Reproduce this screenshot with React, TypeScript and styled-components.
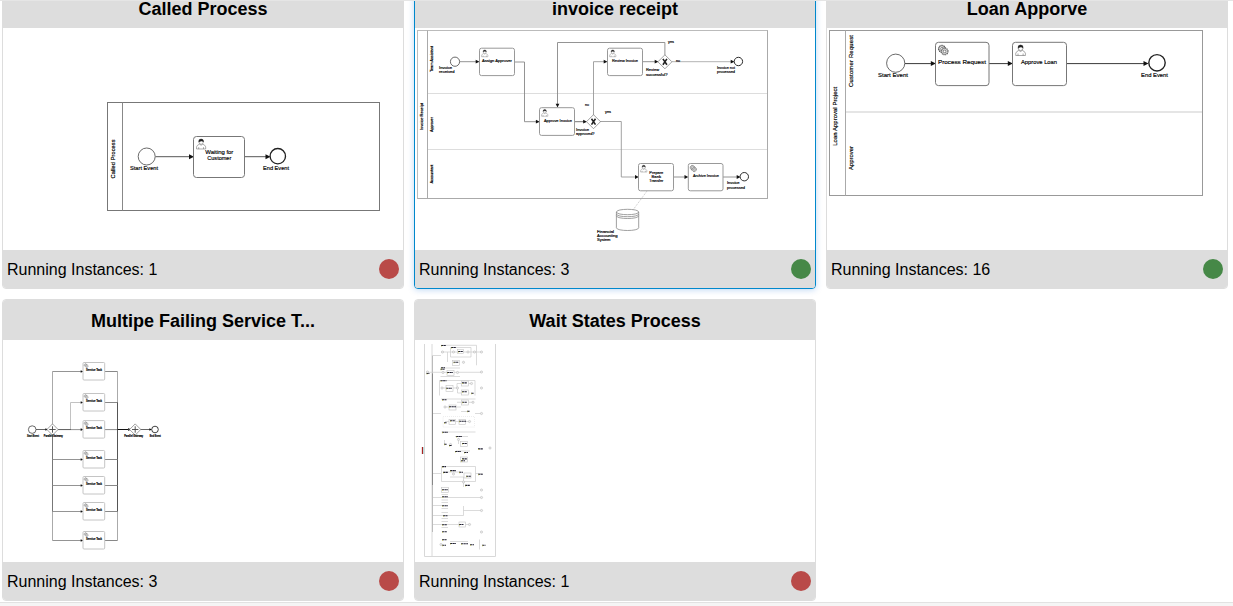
import React from "react";
import styled, { createGlobalStyle } from "styled-components";

const GlobalStyle = createGlobalStyle`
  * { box-sizing: border-box; }
  body { margin: 0; background: #f5f5f5; font-family: "Liberation Sans", Arial, sans-serif; color: #000; overflow: hidden; }
`;

const Page = styled.main`
  height: 603px;
  overflow: hidden;
  background: #fff;
  border-top: 1px solid #e5e5e5;
  border-bottom: 1px solid #e2e2e2;
`;

const Grid = styled.div`
  display: grid;
  grid-template-columns: repeat(3, 402px);
  gap: 10px;
  margin: -14px 0 0 2px;
`;

const Card = styled.section<{ $selected?: boolean }>`
  display: flex;
  flex-direction: column;
  height: 302px;
  overflow: hidden;
  background: #fff;
  border: 1px solid ${(p) => (p.$selected ? "#0088cc" : "#dddddd")};
  border-radius: 4px;
  box-shadow: ${(p) => (p.$selected ? "0 1px 6px rgba(0, 105, 214, 0.25)" : "none")};
`;

const CardTitle = styled.h4`
  margin: 0;
  height: 40px;
  flex: none;
  background: #ddd;
  font-size: 18px;
  font-weight: 700;
  line-height: 20px;
  padding-top: 11px;
  text-align: center;
  white-space: nowrap;
`;

const Preview = styled.svg`
  display: block;
  width: 400px;
  height: 222px;
  flex: none;
  font-family: "Liberation Sans", Arial, sans-serif;
`;

const CardFooter = styled.footer`
  display: flex;
  flex: 1;
  align-items: center;
  justify-content: space-between;
  padding: 0 4px;
  background: #ddd;
  font-size: 16px;
`;

const RunningCount = styled.span`
  line-height: 18px;
  padding-top: 2px;
`;

const StateDot = styled.span<{ $healthy: boolean }>`
  width: 20px;
  height: 20px;
  border-radius: 50%;
  background: ${(p) => (p.$healthy ? "#468847" : "#b94a48")};
`;

type LabelProps = { x: number; y: number; lines: string[]; size: number; widths?: number[]; anchor?: "start" | "middle"; gap?: number; weight?: number };

const Label = ({ x, y, lines, size, widths, anchor = "middle", gap = 4, weight = 400 }: LabelProps) => (
  <g fontSize={size} textAnchor={anchor} fill="#000" stroke="#000" strokeWidth={0.16} fontWeight={weight}>
    {lines.map((t, i) => (
      <text key={i} x={x} y={y + i * gap} textLength={widths?.[i]} lengthAdjust="spacingAndGlyphs">{t}</text>
    ))}
  </g>
);

const SideLabel = ({ x, y, text, size, length }: { x: number; y: number; text: string; size: number; length: number }) => (
  <text transform={`translate(${x} ${y}) rotate(-90)`} fontSize={size} textAnchor="middle" textLength={length} stroke="#000" strokeWidth={0.18}>
    {text}
  </text>
);

const Flow = ({ d, tip, dir = "right", size = 3.8, color = "#444", width = 0.9 }: { d: string; tip?: [number, number]; dir?: "right" | "down"; size?: number; color?: string; width?: number }) => (
  <g>
    <path d={d} fill="none" stroke={color} strokeWidth={width} />
    {tip && (
      <path
        fill="#111"
        d={dir === "right"
          ? `M${tip[0]} ${tip[1]}l${-size} ${-size / 2}v${size}z`
          : `M${tip[0]} ${tip[1]}l${-size / 2} ${-size}h${size}z`}
      />
    )}
  </g>
);

const UserIcon = ({ x, y, s }: { x: number; y: number; s: number }) => (
  <g transform={`translate(${x} ${y}) scale(${s * 1.05})`} stroke="#555" strokeWidth={0.9}>
    <path fill="#fff" d="M0.5 19v-4q1-3.5 5.5-5l3 2 3-2q4.500 1.500 5.500 5v4zM4.500 15.500v3.500M13.500 15.500v3.500" />
    <circle cx={9} cy={6} r={4.2} fill="#fff" />
    <path fill="#222" stroke="#222" d="M4.800 6q-1-5.500 4.200-5.500t4.200 5.500q-1-2.600-4.200-1.800t-4.200 1.800z" />
  </g>
);

const GearIcon = ({ x, y, s }: { x: number; y: number; s: number }) => (
  <g transform={`translate(${x} ${y}) scale(${s})`} fill="#fff" stroke="#444">
    <circle cx={8} cy={8} r={6.4} strokeWidth={2} strokeDasharray="2 1.350" />
    <circle cx={8} cy={8} r={5.4} strokeWidth={1.1} />
    <circle cx={8} cy={8} r={2.6} strokeWidth={1.1} />
    <circle cx={13} cy={13} r={6.4} strokeWidth={2} strokeDasharray="2 1.350" />
    <circle cx={13} cy={13} r={5.4} strokeWidth={1.1} />
    <circle cx={13} cy={13} r={2.6} strokeWidth={1.3} />
  </g>
);

const Task = ({ x, y, w, h, kind, color = "#777", r = 2 }: { x: number; y: number; w: number; h: number; kind: "user" | "service"; color?: string; r?: number }) => {
  const s = w / 100;
  return (
    <g>
      <rect x={x} y={y} width={w} height={h} rx={r} fill="#fff" stroke={color} strokeWidth={1} />
      {kind === "user" ? <UserIcon x={x + 5.5 * s} y={y + 4.5 * s} s={s} /> : <GearIcon x={x + 4 * s} y={y + 4 * s} s={s} />}
    </g>
  );
};

const Gateway = ({ x, y, r, kind }: { x: number; y: number; r: number; kind: "x" | "+" }) => (
  <g>
    <path d={`M${x} ${y - r}l${r} ${r}l${-r} ${r}l${-r} ${-r}z`} fill="#fff" stroke="#777" strokeWidth={0.7} />
    {kind === "x" ? (
      <path d={`M${x - 2} ${y - 2.9}l4 5.8m0 -5.8l-4 5.8`} stroke="#222" strokeWidth={1.6} />
    ) : (
      <path d={`M${x - 3.2} ${y}h6.4m-3.2 -3.2v6.4`} stroke="#444" strokeWidth={0.9} />
    )}
  </g>
);

const Event = ({ x, y, r, end }: { x: number; y: number; r: number; end?: boolean }) => (
  <circle cx={x} cy={y} r={r} fill="#fff" stroke={end ? "#222" : "#444"} strokeWidth={end ? 0.5 + r * 0.11 : 0.8} />
);

const CalledProcess = () => (
  <Preview viewBox="3 28 400 222">
    <rect x={107.5} y={102.5} width={272} height={108} fill="#fff" stroke="#777" />
    <path d="M122.5 102.5v108" stroke="#888" />
    <SideLabel x={115} y={159} text="Called Process" size={5.6} length={39} />
    <Flow d="M155.5 156.7H190" tip={[194, 156.7]} size={5} />
    <Flow d="M245 156.7H266" tip={[270.5, 156.7]} size={5} />
    <Event x={146.7} y={156.5} r={8.5} />
    <Task x={193.5} y={136.5} w={51} h={41} kind="user" r={3} />
    <Event x={277.8} y={156.2} r={7.7} end />
    <Label x={144} y={170} lines={["Start Event"]} widths={[28]} size={5.6} />
    <Label x={219.3} y={154} lines={["Waiting for", "Customer"]} widths={[28, 24]} size={5.6} gap={6} />
    <Label x={276} y={170} lines={["End Event"]} widths={[26]} size={5.6} />
  </Preview>
);

const InvoiceReceipt = () => (
  <Preview viewBox="415 28 400 222">
    <rect x={417.5} y={30.5} width={350} height={168} fill="#fff" stroke="#bbb" />
    <path d="M427.5 30.5v168M417.5 198.5h350M767.5 30.5v168" stroke="#aaa" fill="none" />
    <path d="M428 93.5h339M428 149.5h339" stroke="#ddd" />
    <SideLabel x={422.7} y={116.5} text="Invoice Receipt" size={4} length={27} />
    <SideLabel x={433.3} y={59} text="Team Assistant" size={4} length={26} />
    <SideLabel x={433.3} y={124.5} text="Approver" size={4} length={15} />
    <SideLabel x={433.3} y={174} text="Accountant" size={4} length={19} />
    <Flow d="M460 61.7H477" tip={[479.5, 61.7]} color="#888" />
    <Flow d="M515 62H524.5V121.7H537" tip={[539.7, 121.7]} color="#888" />
    <Flow d="M575 121.7H584" tip={[587, 121.7]} color="#666" />
    <Flow d="M593.5 115V61.7H605" tip={[607.5, 61.7]} color="#999" />
    <Flow d="M643 61.7H655" tip={[658.5, 61.7]} color="#888" />
    <Flow d="M664.9 55V42.5H557.5V104" tip={[557.5, 107.5]} dir="down" color="#888" />
    <Flow d="M672 61.7H732" tip={[734.5, 61.7]} color="#aaa" />
    <Flow d="M600 121.5H621.3V177H636" tip={[638.8, 177]} color="#999" />
    <Flow d="M674 177H685" tip={[688.3, 177]} color="#888" />
    <Flow d="M723 177H737" tip={[740.5, 177]} color="#888" />
    <Event x={455} y={61.7} r={4.6} />
    <Task x={479.5} y={48.2} w={35} h={27.4} kind="user" color="#999" />
    <Task x={539.5} y={107.7} w={35} h={27.7} kind="user" color="#999" />
    <Task x={607.5} y={48.2} w={35} h={27.4} kind="user" color="#999" />
    <Task x={638.5} y={163.5} w={35} h={27.3} kind="user" color="#999" />
    <Task x={688.3} y={163.5} w={34.7} h={27.3} kind="service" color="#999" />
    <Gateway x={593.5} y={121.7} r={7} kind="x" />
    <Gateway x={664.9} y={61.8} r={7} kind="x" />
    <Event x={738.4} y={61.5} r={4.2} end />
    <Event x={744.3} y={176.7} r={4.2} end />
    <Label anchor="start" x={439} y={69} lines={["Invoice", "received"]} widths={[13, 15.5]} size={3.8} />
    <Label x={497} y={62.4} lines={["Assign Approver"]} widths={[30]} size={3.8} />
    <Label x={558} y={122.4} lines={["Approve Invoice"]} widths={[28]} size={3.8} />
    <Label x={625} y={62.2} lines={["Review Invoice"]} widths={[26]} size={3.8} />
    <Label anchor="start" x={646} y={71.2} lines={["Review", "successful?"]} widths={[13, 21.5]} size={3.8} gap={4.7} />
    <Label anchor="start" x={576} y={131.2} lines={["Invoice", "approved?"]} widths={[13, 18.5]} size={3.8} />
    <Label x={587} y={106.2} lines={["no"]} widths={[4]} size={3.8} />
    <Label x={608} y={113} lines={["yes"]} widths={[6]} size={3.8} />
    <Label x={671} y={43} lines={["yes"]} widths={[6]} size={3.8} />
    <Label x={678} y={62.3} lines={["no"]} widths={[4]} size={3.8} />
    <Label anchor="start" x={717} y={69} lines={["Invoice not", "processed"]} widths={[18, 18]} size={3.8} />
    <Label x={656.3} y={174} lines={["Prepare", "Bank", "Transfer"]} widths={[14, 9.5, 14]} size={3.8} />
    <Label x={706} y={177.2} lines={["Archive Invoice"]} widths={[26]} size={3.8} />
    <Label anchor="start" x={727} y={184} lines={["Invoice", "processed"]} widths={[12.5, 18]} size={3.8} gap={4.7} />
    <path d="M647 191l-14 19" stroke="#aaa" strokeWidth={0.7} strokeDasharray="1 1" />
    <path d="M616.4 212v15.8c0 3.6 22.3 3.6 22.3 0V212c0-3.6-22.3-3.6-22.3 0c0 3.6 22.3 3.6 22.3 0m-22.3 2c0 3.6 22.3 3.6 22.3 0m-22.3 1.8c0 3.6 22.3 3.6 22.3 0" fill="#fff" stroke="#888" strokeWidth={0.8} />
    <Label anchor="start" x={597} y={233} lines={["Financial", "Accounting", "System"]} widths={[17, 20.5, 13.5]} size={3.8} />
  </Preview>
);

const LoanApproval = () => (
  <Preview viewBox="827 28 400 222">
    <rect x={829.5} y={30.5} width={373} height={165} fill="#fff" stroke="#999" />
    <path d="M845.5 30.5v165" stroke="#aaa" />
    <path d="M846 112h356" stroke="#ddd" strokeWidth={1.4} />
    <SideLabel x={837} y={116.3} text="Loan Approval Project" size={5.9} length={59} />
    <SideLabel x={853} y={61} text="Customer Request" size={5.9} length={52} />
    <SideLabel x={853} y={158} text="Approver" size={5.9} length={24} />
    <Flow d="M905 63.6H932" tip={[935.8, 63.6]} size={5} color="#222" />
    <Flow d="M989 63.6H1008" tip={[1012.8, 63.6]} size={5} color="#222" />
    <Flow d="M1067 63.6H1144" tip={[1148.5, 63.6]} size={5} color="#222" />
    <Event x={895.7} y={63.2} r={9.1} />
    <Task x={935.5} y={42.3} w={53.5} h={43.3} kind="service" r={3} />
    <Task x={1012.5} y={42.3} w={54} h={43.3} kind="user" r={3} />
    <Event x={1157} y={62.8} r={8.2} end />
    <Label x={893} y={77} lines={["Start Event"]} widths={[30]} size={5.9} />
    <Label x={962} y={64.3} lines={["Process Request"]} widths={[48]} size={5.9} />
    <Label x={1039} y={64.3} lines={["Approve Loan"]} widths={[36]} size={5.9} />
    <Label x={1154.5} y={77} lines={["End Event"]} widths={[27]} size={5.9} />
  </Preview>
);

const SERVICE_ROWS = [371.5, 402.5, 429.6, 459.5, 485.5, 511.5, 540.5];

const FailingServices = () => (
  <Preview viewBox="3 340 400 222">
    <path d="M52.5 371.5V540.5M117.5 371.5V540.5" stroke="#aaa" />
    <path d="M52.5 435V511.5" stroke="#777" />
    <path d="M117.5 402V511.5" stroke="#555" />
    {SERVICE_ROWS.map((y, i) => (
      <g key={y}>
        <Flow d={i === 1 ? `M70.5 429.5V${y}H81` : `M52.5 ${y}H81`} tip={[83.3, y]} size={2.6} color={i === 1 ? "#bbb" : "#888"} />
        <path d={`M105 ${y}H117.5`} stroke="#888" />
        <Task x={83} y={y - 9} w={21.7} h={17.5} kind="service" color="#c4c4c4" r={1} />
        <Label x={94} y={y - 0.2} lines={["Service Task"]} widths={[16]} size={3.1} weight={700} />
      </g>
    ))}
    <path d="M58 429.5h13" stroke="#666" />
    <Flow d="M36 429.5H46" tip={[48, 429.5]} size={2.6} color="#555" />
    <Flow d="M117.5 429.5H128" tip={[131, 429.5]} size={2.8} color="#111" width={1.2} />
    <Flow d="M140 429.5H150" tip={[152, 429.5]} size={2.6} color="#555" />
    <Event x={32.2} y={429.6} r={3.8} />
    <Gateway x={52.5} y={429.5} r={5.6} kind="+" />
    <Gateway x={135.2} y={429.5} r={5.6} kind="+" />
    <Event x={155} y={429.5} r={3.3} end />
    <Label x={33} y={437} lines={["Start Event"]} widths={[12]} size={3} weight={700} />
    <Label x={53.3} y={437} lines={["Parallel Gateway"]} widths={[19]} size={3} weight={700} />
    <Label x={133.7} y={437} lines={["Parallel Gateway"]} widths={[19]} size={3} weight={700} />
    <Label x={155.3} y={437} lines={["End Event"]} widths={[11]} size={3} weight={700} />
  </Preview>
);

// x, y, width of every caption in the miniature diagram
const CAPTIONS: [number, number, number][] = [
  [441, 345.3, 5], [451, 347.3, 5], [458, 351.3, 5], [453.5, 362, 5], [441, 367.5, 4], [440.5, 369, 4],
  [447, 372.3, 6], [426.5, 373.3, 3], [440.5, 380.5, 6], [446, 388, 6], [462, 382.7, 5], [462, 391.5, 5],
  [471, 393, 3], [442, 399.5, 4.5], [462, 402, 5], [449, 406.5, 7], [467, 411, 3], [450, 420.5, 5],
  [459, 421, 7], [444, 422.5, 3], [442, 432, 6], [456, 436.3, 6], [444, 444, 3], [449, 445.3, 3],
  [462, 443.3, 5], [478, 448.7, 5], [455, 451.3, 6], [464, 452.3, 4], [462, 458.7, 5], [461, 460.5, 4],
  [442, 466.4, 4], [443, 472.2, 5], [450, 470.4, 6], [459, 472, 4], [466, 476, 5], [478, 474, 5],
  [465, 485.2, 5], [442, 489.5, 6], [442, 496.5, 6], [442, 505.5, 6], [443, 515.5, 4.5], [442, 524.5, 5],
  [459, 524.3, 4.5], [442, 531.5, 5], [442, 539.5, 4.5], [442, 545, 4], [450, 543.3, 6], [461, 543.5, 7],
  [470, 544.6, 4], [482, 545, 3.5],
];

const MINI_BOXES: [number, number, number, number][] = [
  [457.5, 349.5, 6, 4], [452.5, 360.5, 7, 5], [447, 370.5, 7, 5], [446, 385.5, 7, 6], [461.5, 381, 7, 5],
  [461.5, 390, 7, 5], [461.5, 400, 7, 5], [449, 405, 7, 5], [449, 419.5, 6.5, 5], [459, 419.5, 6.5, 5],
  [460.5, 441.5, 7, 5], [460.5, 457, 7, 5], [464, 473, 7, 5], [441.5, 487.5, 7, 5], [459, 522, 6.5, 5],
];

const MINI_EVENTS: [number, number][] = [
  [427.5, 372], [442.5, 352], [453.5, 352], [468, 352], [474.5, 352], [481.5, 352], [463.5, 362.3], [443, 372.5],
  [457.5, 372.5], [481.5, 372], [442, 388], [457.5, 388], [471.5, 383.5], [481.5, 388], [445, 407], [473, 402.3],
  [481.5, 413.5], [469.5, 421.5], [450.5, 444.5], [458.5, 439.5], [490, 448], [453.5, 474], [463.5, 482],
  [481.5, 490], [481.5, 497.5], [481.5, 510.5], [469.5, 524.5], [481.5, 532], [441, 544.5],
];

const WaitStates = () => (
  <Preview viewBox="415 340 400 222">
    <path d="M424.5 344v212.5h71V344M432 344v212" fill="none" stroke="#d8d8d8" />
    <path d="M432.5 373v112" stroke="#888" />
    <path d="M432.5 485v47M432.5 355.5v18" stroke="#bbb" />
    <path
      fill="none"
      stroke="#ccc"
      strokeWidth={0.7}
      d="M427 372.3h54M433 355.5h8M441 345.3h35.5v20M450.5 347.5h20.5v9.5h-20.5zM441 352h40M447.5 352v10M440.5 368h19.5M440.5 376.5h19.5M439.5 395.5v-15h35.5v15M441 388h16v-4.5h14M457.5 388v5h12M441 399h34.5M445 407h16M457 402.3h16M461 411.5h8M433 413.5h8M475 413.5h7M445 421.5h24M441.5 432h34M455 436.5h13M458.5 438v6M433 473.5h8M441.5 466.5h34v15h-34zM444 472h17M450 477h16M463.5 477v10M475.5 473.5h7M433 497.5h49M441.5 494.5h6.5M441.5 500h6.5M433 505.5h9M441.5 502.5h6.5M441.5 508.5h6.5M433 515.5h30.5v-9.5M463.5 510.5h18M441.5 512.5h6.5M441.5 518.5h6.5M433 524.5h36M441.5 521.5h6.5M441.5 527.5h6.5M442 539.5h5M450 541.5h18M479.5 539.5v10M444.5 440v5M456 451h14"
    />
    <path d="M443 416.5h31.5v10.5h-31.5z" fill="none" stroke="#ddd" strokeWidth={0.5} strokeDasharray="1 1" />
    {MINI_BOXES.map(([x, y, w, h]) => (
      <rect key={`${x}-${y}`} x={x} y={y} width={w} height={h} fill="#fff" stroke="#c4c4c4" strokeWidth={0.6} />
    ))}
    {MINI_EVENTS.map(([x, y]) => (
      <circle key={`${x}-${y}`} cx={x} cy={y} r={1.1} fill="#eee" stroke="#bbb" strokeWidth={0.6} />
    ))}
    {CAPTIONS.map(([x, y, w]) => (
      <g key={`${x}-${y}`}>
        <path d={`M${x} ${y + 0.2}h${w}`} stroke="#223" strokeWidth={1.1} strokeDasharray="2.200 0.400" />
        <path d={`M${x} ${y + 0.8}h1`} stroke="#cc4" strokeWidth={0.7} />
      </g>
    ))}
    <path d="M422.5 447v7" stroke="#a22" strokeWidth={1.3} />
    <path d="M423.6 447v7" stroke="#8dd" strokeWidth={0.6} />
  </Preview>
);

const PROCESSES = [
  { title: "Called Process", running: 1, healthy: false, Diagram: CalledProcess },
  { title: "invoice receipt", running: 3, healthy: true, selected: true, Diagram: InvoiceReceipt },
  { title: "Loan Apporve", running: 16, healthy: true, Diagram: LoanApproval },
  { title: "Multipe Failing Service T...", running: 3, healthy: false, Diagram: FailingServices },
  { title: "Wait States Process", running: 1, healthy: false, Diagram: WaitStates },
];

export default function App() {
  return (
    <>
      <GlobalStyle />
      <Page>
        <Grid>
          {PROCESSES.map(({ title, running, healthy, selected, Diagram }) => (
            <Card key={title} $selected={selected}>
              <CardTitle>{title}</CardTitle>
              <Diagram />
              <CardFooter>
                <RunningCount>Running Instances: {running}</RunningCount>
                <StateDot $healthy={healthy} />
              </CardFooter>
            </Card>
          ))}
        </Grid>
      </Page>
    </>
  );
}
